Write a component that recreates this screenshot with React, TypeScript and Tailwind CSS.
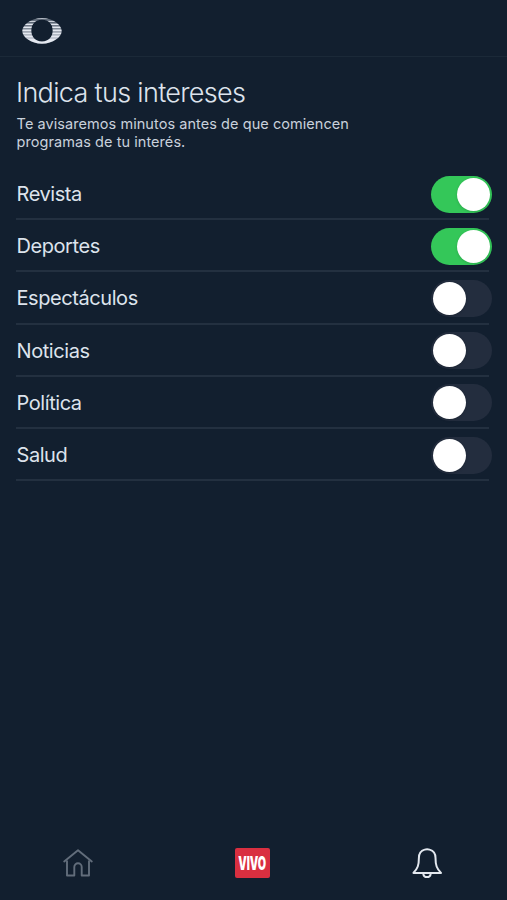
import { useState } from "react";
import clsx from "clsx";

const interests = [
  { id: "revista", label: "Revista", enabled: true },
  { id: "deportes", label: "Deportes", enabled: true },
  { id: "espectaculos", label: "Espectáculos", enabled: false },
  { id: "noticias", label: "Noticias", enabled: false },
  { id: "politica", label: "Política", enabled: false },
  { id: "salud", label: "Salud", enabled: false },
];

function Logo() {
  return (
    <svg width="40" height="28" viewBox="0 0 40 28" aria-hidden="true">
      <defs>
        <clipPath id="ring">
          <path
            clipRule="evenodd"
            d="M20 1C31 1 39.7 8 39.7 14S31 26.7 20 26.7 0.3 20 0.3 14 9 1 20 1ZM20 2.7C13 2.7 9.3 7.6 9.3 13.5S13 24.5 20 24.5 30.7 19.4 30.7 13.5 27 2.7 20 2.7Z"
          />
        </clipPath>
      </defs>
      <g clipPath="url(#ring)">
        <rect width="40" height="28" fill="#a9b3c2" fillOpacity="0.3" />
        <g fill="#e4e8f0">
          <rect y="1" width="40" height="1.3" fillOpacity="0.7" />
          <rect y="3.7" width="40" height="1.5" fillOpacity="0.85" />
          <rect y="6.5" width="40" height="1.8" />
          <rect y="9.4" width="40" height="2" />
          <rect y="12.3" width="40" height="2.3" />
          <rect y="15.3" width="40" height="2.4" />
          <rect y="18.2" width="40" height="2.6" />
          <rect y="21.2" width="40" height="6" />
        </g>
      </g>
    </svg>
  );
}

function HomeIcon() {
  return (
    <svg width="32" height="30" viewBox="0 0 32 30" fill="none" stroke="#626d7b" strokeWidth="1.9" strokeLinecap="round" strokeLinejoin="round">
      <path d="M2.2 13.5 16 2.2l13.8 11.3" />
      <path d="M5 13.2V27.5h7.3V19a3.7 3.7 0 0 1 7.4 0v8.5H27V13.2" />
    </svg>
  );
}

function BellIcon() {
  return (
    <svg width="32" height="32" viewBox="0 0 32 32" fill="none" stroke="#e3e8ef" strokeWidth="2" strokeLinejoin="round">
      <path d="M13.6 2.6C9.8 3.7 7.9 6.8 7.9 10.8c0 7.4-1.2 10.8-5.5 15.1h27.6c-4.3-4.3-5.5-7.7-5.5-15.1 0-4-2.1-7.1-5.9-8.2-1.6-.6-3.4-.6-5 0Z" />
      <path d="M12.2 26.3c.3 2.5 1.7 3.8 3.8 3.8s3.5-1.3 3.8-3.8" />
    </svg>
  );
}

function Toggle({ checked, onChange, label }: { checked: boolean; onChange: () => void; label: string }) {
  return (
    <button
      type="button"
      role="switch"
      aria-checked={checked}
      aria-label={label}
      onClick={onChange}
      className={clsx(
        "flex h-[37px] w-[61px] shrink-0 items-center rounded-full px-[2px]",
        checked ? "justify-end bg-[#34c759]" : "justify-start bg-[#232d3e]"
      )}
    >
      <span className="size-[33px] rounded-full bg-white shadow-[0_1px_3px_rgba(0,0,0,0.15)]" />
    </button>
  );
}

export default function App() {
  const [items, setItems] = useState(interests);

  const toggle = (id: string) =>
    setItems((prev) => prev.map((item) => (item.id === id ? { ...item, enabled: !item.enabled } : item)));

  return (
    <div className="flex h-[900px] w-[507px] flex-col overflow-hidden bg-[#121f2f] font-['Inter',sans-serif] text-[#dde3ec]">
      <header className="flex h-[57px] shrink-0 items-center border-b border-[#1b2938] pt-[6px] pl-[22px]">
        <Logo />
      </header>

      <main className="flex-1 pr-[15px] pl-4">
        <h1 className="pt-[18px] text-[27px] leading-[36px] font-light tracking-[-0.68px]">Indica tus intereses</h1>
        <p className="mt-[4px] pl-[0.6px] text-[14.5px] leading-[17.5px] tracking-[0.06px] text-[#c9d1dc]">
          Te avisaremos minutos antes de que comiencen
          <br />
          programas de tu interés.
        </p>

        <ul className="mt-[18px]">
          {items.map((item) => (
            <li key={item.id} className="flex h-[52.2px] flex-col">
              <div className="flex flex-1 items-center justify-between pt-[2px]">
                <span className="pl-[0.5px] text-[20px] leading-6 tracking-[-0.43px]">{item.label}</span>
                <Toggle checked={item.enabled} onChange={() => toggle(item.id)} label={item.label} />
              </div>
              <div className="mr-[3px] h-[2px] shrink-0 bg-[#233040]" />
            </li>
          ))}
        </ul>
      </main>

      <nav className="flex h-[74px] shrink-0 items-center justify-between pr-[64px] pl-[62px]">
        <a href="#inicio" aria-label="Inicio">
          <HomeIcon />
        </a>
        <a href="#vivo" className="flex h-[30px] w-[35px] items-center justify-center rounded-[2px] bg-[#d92f40]">
          <span className="scale-x-[0.58] text-[18.5px] leading-none font-black text-white">VIVO</span>
        </a>
        <a href="#avisos" aria-label="Avisos">
          <BellIcon />
        </a>
      </nav>
    </div>
  );
}
